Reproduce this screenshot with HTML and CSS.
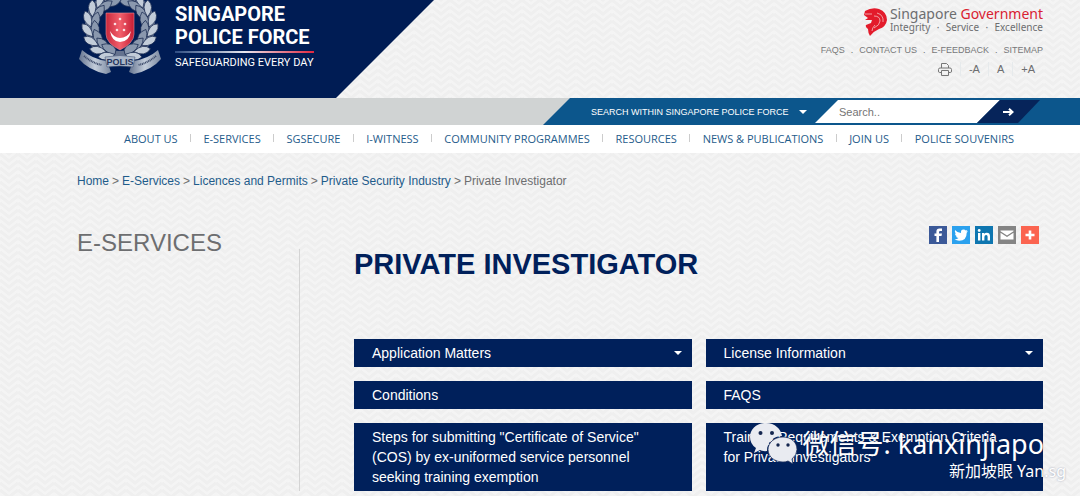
FILE: index.html
```html
<!DOCTYPE html>
<html lang="en">
<head>
    <meta charset="UTF-8">
    <meta name="viewport" content="width=device-width, initial-scale=1.0">
    <title>Private Investigator - Singapore Police Force</title>
    <link rel="stylesheet" href="styles.css">
</head>
<body>
    <header class="banner">
        <a class="brand" href="#">
            <svg class="crest" viewBox="0 0 84 76" aria-hidden="true">
                <defs>
                    <linearGradient id="red" x1="0" x2="1">
                        <stop offset="0" stop-color="#c8283c"/>
                        <stop offset=".5" stop-color="#f2606c"/>
                        <stop offset="1" stop-color="#c41c34"/>
                    </linearGradient>
                    <linearGradient id="steel" x1="0" x2="1">
                        <stop offset="0" stop-color="#65748f"/>
                        <stop offset=".5" stop-color="#c3cddb"/>
                        <stop offset="1" stop-color="#7a889f"/>
                    </linearGradient>
                    <g id="leaf" stroke="#17284f" stroke-width=".7">
                        <path d="M41 55 Q52 56 56 48 Q47 43 41 50Z" fill="#8a98ae"/>
                        <path d="M41 55 Q48 66 57 61 Q54 52 41 55Z" fill="#c2ccd9"/>
                    </g>
                    <g id="branch">
                        <use href="#leaf" transform="rotate(-150 42 26)"/>
                        <use href="#leaf" transform="rotate(-130 42 26)"/>
                        <use href="#leaf" transform="rotate(-110 42 26)"/>
                        <use href="#leaf" transform="rotate(-90 42 26)"/>
                        <use href="#leaf" transform="rotate(-70 42 26)"/>
                        <use href="#leaf" transform="rotate(-50 42 26)"/>
                        <use href="#leaf" transform="rotate(-30 42 26)"/>
                        <use href="#leaf" transform="rotate(-12 42 26)"/>
                    </g>
                </defs>
                <circle cx="42" cy="26" r="30" fill="none" stroke="#65738f" stroke-width="10"/>
                <use href="#branch"/>
                <use href="#branch" transform="translate(84 0) scale(-1 1)"/>
                <path d="M28 13 H56 V34 Q56 43 42 50 Q28 43 28 34Z" fill="url(#red)" stroke="#e58e99" stroke-width=".6"/>
                <path d="M32 31 Q34 42 42 42 Q51 42 53 31 Q49 38 42 38 Q36 38 32 31Z" fill="#fff"/>
                <g fill="#fbdfe2">
                    <circle cx="42" cy="19" r="1.3"/>
                    <circle cx="37" cy="24" r="1.3"/>
                    <circle cx="47" cy="24" r="1.3"/>
                    <circle cx="39" cy="30" r="1.3"/>
                    <circle cx="46" cy="30" r="1.3"/>
                </g>
                <path d="M4 50 Q14 59 29 61 L33 72 L28 74 Q10 70 1 59Z" fill="url(#steel)"/>
                <path d="M80 50 Q70 59 55 61 L51 72 L56 74 Q74 70 83 59Z" fill="url(#steel)"/>
                <path d="M27 57 Q42 54 57 57 L55 67 Q42 65 29 67Z" fill="#aab6c8" stroke="#4c5b7a" stroke-width=".6"/>
                <text class="crest-name" x="42" y="65" text-anchor="middle">POLIS</text>
                <path d="M6 56 Q14 63 24 65 M78 56 Q70 63 60 65" fill="none" stroke="#3a4868" stroke-width="2" stroke-dasharray="1 .7"/>
            </svg>
            <span class="brand-text">
                <span class="brand-name">SINGAPORE<br>POLICE FORCE</span>
                <span class="brand-motto">SAFEGUARDING EVERY DAY</span>
            </span>
        </a>

        <div class="gov">
            <a class="gov-logo" href="#">
                <svg class="lion" viewBox="0 0 24 28" aria-hidden="true">
                    <path d="M2 3 Q9 -1 16 1 Q24 4 24 12 Q23 19 16 21 Q11 23 7 28 Q5 25 5 21 Q2 19 3 17 L8 15 L9 12 L2 12 L5 10 L1 7Z" fill="#e31b2b"/>
                    <path d="M2 6 L9 6 M11 8 Q17 8 17 13 Q17 17 11 20 M14 5 Q21 7 20 14 M9 23 Q9 20 12 17" fill="none" stroke="#f6dada" stroke-width=".7"/>
                </svg>
                <span>
                    <span class="gov-name">Singapore <b>Government</b></span>
                    <span class="gov-values"><i>Integrity</i><i>·</i><i>Service</i><i>·</i><i>Excellence</i></span>
                </span>
            </a>
            <nav class="top-links">
                <a href="#">FAQS</a><span>.</span>
                <a href="#">CONTACT US</a><span>.</span>
                <a href="#">E-FEEDBACK</a><span>.</span>
                <a href="#">SITEMAP</a>
            </nav>
            <div class="tools">
                <button type="button" aria-label="Print">
                    <svg class="printer" viewBox="0 0 14 13" fill="none" stroke="#777" aria-hidden="true">
                        <path d="M3.500 5V.5H8.500L10.500 2.500V5M3 9.500H1.500Q.5 9.500 .5 8V6.500Q.5 5 2 5H12Q13.500 5 13.500 6.500V8Q13.500 9.500 12.500 9.500H11M3.500 7.500H10.500V12.500H3.500Z"/>
                    </svg>
                </button>
                <button type="button">-A</button>
                <button type="button">A</button>
                <button type="button">+A</button>
            </div>
        </div>
    </header>

    <div class="search-bar">
        <form class="search" action="#">
            <label class="scope">
                <select aria-label="Search scope">
                    <option>SEARCH WITHIN SINGAPORE POLICE FORCE</option>
                </select>
                <span class="caret"></span>
            </label>
            <input type="text" placeholder="Search.." aria-label="Search">
            <button type="submit" aria-label="Go">
                <svg viewBox="0 0 11 8" fill="none" stroke="#fff" stroke-width="2" aria-hidden="true">
                    <path d="M0 4H9M6 .8L9.500 4L6 7.200"/>
                </svg>
            </button>
        </form>
    </div>

    <nav class="main-nav">
        <a href="#">ABOUT US</a>
        <a href="#">E-SERVICES</a>
        <a href="#">SGSECURE</a>
        <a href="#">I-WITNESS</a>
        <a href="#">COMMUNITY PROGRAMMES</a>
        <a href="#">RESOURCES</a>
        <a href="#">NEWS &amp; PUBLICATIONS</a>
        <a href="#">JOIN US</a>
        <a href="#">POLICE SOUVENIRS</a>
    </nav>

    <nav class="breadcrumb" aria-label="Breadcrumb">
        <a href="#">Home</a><span>&gt;</span>
        <a href="#">E-Services</a><span>&gt;</span>
        <a href="#">Licences and Permits</a><span>&gt;</span>
        <a href="#">Private Security Industry</a><span>&gt;</span>
        <span>Private Investigator</span>
    </nav>

    <main class="page">
        <aside class="side">
            <h2>E-SERVICES</h2>
        </aside>
        <section class="content">
            <div class="share">
                <a class="facebook" href="#" aria-label="Facebook">
                    <svg viewBox="0 0 18 18"><path d="M10 16V10H12.500L13 7.500H10V6Q10 5 11.200 5H13V2.600H10.500Q7.400 2.600 7.400 5.600V7.500H5.500V10H7.400V16Z" fill="#fff"/></svg>
                </a>
                <a class="twitter" href="#" aria-label="Twitter">
                    <svg viewBox="0 0 18 18"><path d="M3 4Q5.500 7 9 7Q8.600 3.600 11.600 3.600Q13 3.600 13.700 4.500L15.400 4L14.500 5.500L16 5.200L14.700 6.700Q14.700 14.700 7.200 14.700Q4.600 14.700 2.500 13.300Q5 13.400 6.500 12.100Q4.500 12 3.900 10.300H5Q3 9.500 2.900 7.500L4 7.800Q2.300 6 3 4Z" fill="#fff"/></svg>
                </a>
                <a class="linkedin" href="#" aria-label="LinkedIn">
                    <svg viewBox="0 0 18 18"><path d="M3 7H5.400V14.500H3ZM7 7H9.300V8Q10 6.800 11.800 6.800Q15 6.800 15 10.200V14.500H12.600V10.700Q12.600 8.900 11.200 8.900Q9.400 8.900 9.400 11V14.500H7Z" fill="#fff"/><circle cx="4.200" cy="4.500" r="1.400" fill="#fff"/></svg>
                </a>
                <a class="email" href="#" aria-label="Email">
                    <svg viewBox="0 0 18 18"><path d="M2.500 5.200V4.500H15.500V5.200L9 9.500ZM2.500 6.800L9 11L15.500 6.800V13.500H2.500Z" fill="#fff"/></svg>
                </a>
                <a class="more" href="#" aria-label="More">
                    <svg viewBox="0 0 18 18"><path d="M9 4.500V13.500M4.500 9H13.500" stroke="#fff" stroke-width="2.600"/></svg>
                </a>
            </div>
            <h1>PRIVATE INVESTIGATOR</h1>
            <div class="topics">
                <button class="topic" type="button">Application Matters<span class="caret"></span></button>
                <button class="topic" type="button">License Information<span class="caret"></span></button>
                <a class="topic" href="#">Conditions</a>
                <a class="topic" href="#">FAQS</a>
                <a class="topic" href="#">Steps for submitting "Certificate of Service" (COS) by ex-uniformed service personnel seeking training exemption</a>
                <a class="topic" href="#">Training Requirements &amp; Exemption Criteria for Private Investigators</a>
            </div>
        </section>
        <div class="watermark">
            <div class="account">
                <svg class="wechat" viewBox="0 0 48 41" aria-hidden="true">
                    <path d="M16 0C7 0 0 6 0 14Q0 21 6 25L4 30L10 27Q13 28.500 17 28C17 19 24 13 32 13C31 6 25 0 16 0Z" fill="#e9ebf1"/>
                    <path d="M33 14C24 14 18 20 18 26.500C18 34 25 39 33 39Q36 39 38 38L43 41L42 36Q47 32 47 26.500C47 19 41 14 33 14Z" fill="#e9ebf1" stroke="#1d2f5c" stroke-width=".8"/>
                    <g fill="#15264f">
                        <circle cx="10.500" cy="10" r="2"/>
                        <circle cx="22" cy="10" r="2"/>
                        <circle cx="28" cy="22" r="1.700"/>
                        <circle cx="38" cy="22" r="1.700"/>
                    </g>
                </svg>
                <span>微信号: kanxinjiapo</span>
            </div>
            <div class="source">新加坡眼 Yan.sg</div>
        </div>
    </main>
</body>
</html>
```

FILE: styles.css
```css
* {
    margin: 0;
    padding: 0;
    box-sizing: border-box;
}
body {
    background: #f4f4f4 url("data:image/svg+xml,%3Csvg xmlns='http://www.w3.org/2000/svg' width='18' height='7'%3E%3Cpath d='M0 -7L9 0L18 -7M0 0L9 7L18 0M0 7L9 14L18 7' fill='none' stroke='%23efefef' stroke-width='3'/%3E%3C/svg%3E");
    font-family: Arial, "Liberation Sans", sans-serif;
    font-size: 12px;
    color: #6d6e70;
}
a {
    color: #1f5c8b;
    text-decoration: none;
}
button, input, select {
    border: none;
    background: none;
    font-family: inherit;
    color: inherit;
}
svg {
    display: block;
}
.banner {
    display: flex;
    justify-content: space-between;
    height: 98px;
    padding-right: 37px;
}
.brand {
    display: flex;
    align-items: flex-start;
    gap: 13px;
    width: 434px;
    padding-left: 78px;
    background: #001c54;
    color: #fff;
    clip-path: polygon(0 0, 100% 0, 336px 100%, 0 100%);
}
.crest {
    width: 84px;
    height: 76px;
}
.crest-name {
    font-size: 9px;
    font-weight: bold;
    fill: #24345c;
}
.brand-name {
    display: block;
    padding: 3px 0 2px;
    font-family: Roboto, sans-serif;
    font-size: 20px;
    font-weight: bold;
    line-height: 23px;
}
.brand-motto {
    display: block;
    padding-top: 2px;
    border-top: 2px solid;
    border-image: linear-gradient(90deg, #2b4a80, #e8e8f0 50%, #e0243c) 1;
    font-family: Roboto, sans-serif;
    font-size: 11px;
    line-height: 15px;
}
.gov {
    display: flex;
    flex-direction: column;
    align-items: flex-end;
    padding-top: 6px;
}
.gov-logo {
    display: flex;
    gap: 3px;
    color: #6d6e70;
    font-family: "Noto Sans", sans-serif;
}
.lion {
    width: 24px;
    height: 28px;
    margin-top: 2px;
}
.gov-name {
    display: block;
    font-size: 14px;
    line-height: 15px;
}
.gov-name b {
    font-weight: normal;
    color: #d92231;
}
.gov-values {
    display: flex;
    justify-content: space-between;
    font-size: 10px;
    line-height: 13px;
}
.gov-values i {
    font-style: normal;
}
.top-links {
    display: flex;
    gap: 6px;
    margin-top: 8px;
    font-size: 9px;
    line-height: 12px;
}
.top-links a {
    color: #77787a;
}
.tools {
    display: flex;
    margin-top: 6px;
}
.tools button {
    padding: 0 8px;
    border-left: 1px solid #e6eaec;
    font-size: 11px;
    line-height: 14px;
}
.tools button:first-child {
    border-left: none;
}
.printer {
    width: 14px;
    height: 13px;
}
.search-bar {
    display: flex;
    justify-content: flex-end;
    height: 27px;
    background: #d0d3d3;
}
.search {
    display: flex;
    align-items: flex-start;
    width: 537px;
    padding: 2px 40px 2px 48px;
    background: #0c568c;
    color: #fff;
    clip-path: polygon(27px 0, 100% 0, 100% 100%, 0 100%);
}
.scope {
    display: flex;
    align-items: center;
    flex: 1;
    height: 23px;
}
.scope select {
    appearance: none;
    width: 208px;
    font-size: 9px;
}
.caret {
    border: 4px solid transparent;
    border-top-color: #fff;
    border-bottom: none;
}
.search input {
    width: 185px;
    height: 23px;
    padding-left: 24px;
    background: #fff;
    color: #555;
    font-size: 11px;
    clip-path: polygon(23px 0, 100% 0, 162px 100%, 0 100%);
}
.search button {
    display: flex;
    align-items: center;
    justify-content: center;
    width: 63px;
    height: 23px;
    margin-left: -23px;
    background: #06245a;
    clip-path: polygon(23px 0, 100% 0, 41px 100%, 0 100%);
}
.search button svg {
    width: 11px;
    height: 8px;
}
.main-nav {
    display: flex;
    justify-content: space-between;
    align-items: center;
    height: 28px;
    padding: 0 66px 2px 124px;
    background: #fff;
    font-family: "Open Sans", sans-serif;
    font-size: 11px;
    font-weight: 500;
}
.main-nav a {
    display: flex;
    flex: auto;
    align-items: center;
    white-space: nowrap;
}
.main-nav a:last-child {
    flex: none;
}
.main-nav a:not(:last-child)::after {
    content: "";
    height: 8px;
    margin: 0 auto;
    border-left: 1px solid #ccc;
}
.breadcrumb {
    display: flex;
    gap: 3px;
    padding: 20px 37px 0 77px;
    line-height: 16px;
}
.page {
    position: relative;
    display: flex;
    padding: 36px 37px 5px 77px;
}
.side {
    width: 223px;
    flex: none;
    background: linear-gradient(#d4d4d4, #d4d4d4) right 24px top 24px / 1px 100% no-repeat;
    background-position: right 0 top 24px;
}
.side h2 {
    padding-top: 4px;
    font-size: 24px;
    font-weight: normal;
    line-height: 28px;
}
.content {
    flex: 1;
    padding-left: 54px;
}
.share {
    display: flex;
    justify-content: flex-end;
    gap: 5px;
    padding: 1px 4px 0 0;
}
.share svg {
    width: 18px;
    height: 18px;
}
.facebook {
    background: #3b5998;
}
.twitter {
    background: #2ba1ee;
}
.linkedin {
    background: #0e76b0;
}
.email {
    background: #848484;
}
.more {
    background: #fb6450;
}
h1 {
    color: #00205b;
    font-size: 29px;
    line-height: 40px;
}
.topics {
    display: grid;
    grid-template-columns: 1fr 1fr;
    gap: 14px;
    margin-top: 55px;
}
.topic {
    display: flex;
    justify-content: space-between;
    padding: 4px 36px 4px 18px;
    background: #00205b;
    color: #fff;
    font-size: 14px;
    line-height: 20px;
    text-align: left;
}
.topic .caret {
    align-self: center;
    margin-right: -26px;
}
.watermark {
    position: absolute;
    right: 14px;
    bottom: 18px;
    color: #fff;
    font-family: "Noto Sans", "Noto Sans CJK SC", sans-serif;
    text-shadow: 0 0 2px rgba(0, 20, 70, .4);
    pointer-events: none;
}
.account {
    display: flex;
    gap: 5px;
    padding-right: 22px;
    font-size: 27px;
    line-height: 41px;
}
.wechat {
    width: 48px;
    height: 41px;
}
.source {
    font-size: 16px;
    line-height: 14px;
    text-align: right;
}
```
